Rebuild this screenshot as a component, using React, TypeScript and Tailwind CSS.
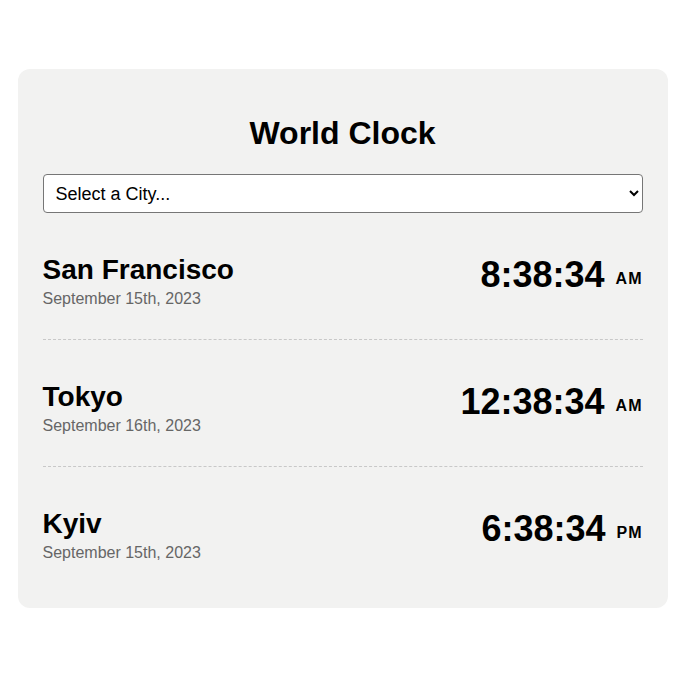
import { useState } from "react";

type City = {
  name: string;
  date: string;
  time: string;
  period: string;
};

const cities: City[] = [
  { name: "San Francisco", date: "September 15th, 2023", time: "8:38:34", period: "AM" },
  { name: "Tokyo", date: "September 16th, 2023", time: "12:38:34", period: "AM" },
  { name: "Kyiv", date: "September 15th, 2023", time: "6:38:34", period: "PM" },
];

export default function App() {
  const [city, setCity] = useState("");

  return (
    <div className="min-h-[685px] bg-white pt-[69px] font-['Liberation_Sans',Arial,sans-serif] text-black">
      <div className="mx-auto w-[650px] rounded-xl bg-[#f2f2f1] px-[25px] pt-[25px] pb-[15px]">
        <h1 className="mt-[21px] mb-[22px] text-center text-[32px] font-bold leading-[37px]">World Clock</h1>
        <select
          value={city}
          onChange={(e) => setCity(e.target.value)}
          className="block h-[39px] w-full rounded border border-[#767676] bg-white px-2 text-[18px]"
        >
          <option value="">Select a City...</option>
          <option value="London">London</option>
          <option value="New York">New York</option>
          <option value="Sydney">Sydney</option>
        </select>
        <div>
          {cities.map((c, i) => (
            <div
              key={c.name}
              className={
                "flex items-start justify-between pt-[41px] pb-[31px] " +
                (i < cities.length - 1 ? "border-b border-dashed border-[#c8c8c8]" : "")
              }
            >
              <div>
                <div className="text-[28px] font-bold leading-[32px]">{c.name}</div>
                <div className="mt-[4px] text-[16px] leading-[18px] text-[#666]">{c.date}</div>
              </div>
              <div className="flex items-start">
                <span className="text-[36px] font-bold leading-[41px]">{c.time}</span>
                <span className="ml-[11px] mt-[16px] text-[16px] font-bold leading-[18px] tracking-[1px]">{c.period}</span>
              </div>
            </div>
          ))}
        </div>
      </div>
    </div>
  );
}
